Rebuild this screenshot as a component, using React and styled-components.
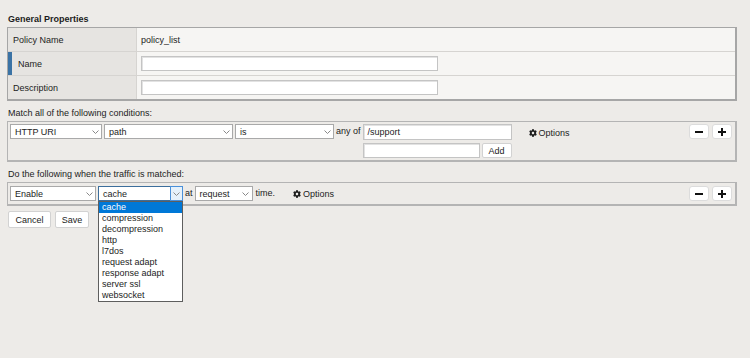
import React from 'react';
import styled, { createGlobalStyle } from 'styled-components';
import { FaCog } from 'react-icons/fa';

const GlobalStyle = createGlobalStyle`
  html, body {
    margin: 0;
    padding: 0;
    background: #edebe8;
  }
  body {
    font-family: "Liberation Sans", Arial, sans-serif;
    font-size: 9px;
    color: #1c1c1c;
  }
`;

const Page = styled.div`
  display: flex;
  flex-direction: column;
  padding: 14px 13px 0 7px;
  height: 344px;
`;

const Title = styled.div`
  font-weight: bold;
  line-height: 11px;
  padding-left: 1px;
`;

const Caption = styled.div`
  line-height: 11px;
  padding-left: 1px;
  margin-top: ${p => p.$top}px;
`;

const Table = styled.div`
  margin-top: 2px;
  border: 1px solid #a6a6a6;
  border-right-width: 2px;
  border-bottom-width: 2px;
  background: #f6f5f3;
`;

const Row = styled.div`
  display: grid;
  grid-template-columns: 129px 1fr;
  height: 23px;
  border-bottom: 1px solid #d6d4d1;
  &:last-child {
    border-bottom: none;
  }
`;

const Label = styled.div`
  display: flex;
  align-items: center;
  background: #e6e4e1;
  border-right: 1px solid #d6d4d1;
  padding-left: ${p => (p.$marked ? 6 : 5)}px;
  border-left: ${p => (p.$marked ? '4px solid #3b73a5' : 'none')};
`;

const Value = styled.div`
  display: flex;
  align-items: center;
  padding-left: 4px;
`;

const TextInput = styled.div`
  box-sizing: border-box;
  width: ${p => p.$w}px;
  height: ${p => p.$h || 15}px;
  background: #fff;
  border: 1px solid #c4c4c4;
  box-shadow: inset 1px 1px 0 #e2e2e2;
  display: flex;
  align-items: center;
  padding-left: 4px;
`;

const Box = styled.div`
  margin-top: 2px;
  border: 1px solid #b4b4b4;
  border-right-width: 2px;
  border-bottom-width: 2px;
  display: flex;
  align-items: flex-start;
  padding: ${p => p.$pad};
`;

const SelectBox = styled.div`
  position: relative;
  box-sizing: border-box;
  width: ${p => p.$w}px;
  height: 15px;
  margin-right: 2px;
  background: #fff;
  border: 1px solid ${p => (p.$focus ? '#3c6e9c' : '#a9a9a9')};
  display: flex;
  align-items: center;
  padding-left: 4px;
  flex-shrink: 0;
`;

const Chevron = styled.div`
  position: absolute;
  right: 0;
  top: 0;
  bottom: 0;
  width: 12px;
  display: flex;
  align-items: center;
  justify-content: center;
  box-sizing: border-box;
  ${p => p.$focus && 'border: 1px solid #4a90d9; background: #e5f1fb; top: -1px; bottom: -1px; right: -1px; width: 13px;'}
`;

const Word = styled.span`
  line-height: 15px;
  margin: 0 ${p => p.$r || 2}px 0 ${p => p.$l || 0}px;
  flex-shrink: 0;
`;

const Stack = styled.div`
  display: flex;
  flex-direction: column;
  gap: 3px;
`;

const Line = styled.div`
  display: flex;
  gap: 2px;
`;

const SmallButton = styled.div`
  box-sizing: border-box;
  height: ${p => p.$h || 15}px;
  width: ${p => p.$w}px;
  background: #fff;
  border: 1px solid #d2d2d2;
  border-radius: 2px;
  display: flex;
  align-items: center;
  justify-content: center;
`;

const Options = styled.div`
  display: flex;
  align-items: center;
  gap: 2px;
  height: 15px;
  margin-left: ${p => p.$l}px;
  margin-top: ${p => p.$t || 0}px;
  flex-shrink: 0;
`;

const Controls = styled.div`
  margin-left: auto;
  display: flex;
  gap: 3px;
`;

const IconButton = styled.div`
  box-sizing: border-box;
  width: 20px;
  height: 15px;
  background: #fff;
  border: 1px solid #dcdcdc;
  border-radius: 3px;
  display: flex;
  align-items: center;
  justify-content: center;
`;

const Actions = styled.div`
  display: flex;
  gap: 4px;
  margin-top: 5px;
  padding-left: 1px;
`;

const Menu = styled.div`
  position: absolute;
  top: 14px;
  left: -1px;
  width: 85px;
  box-sizing: border-box;
  background: #fff;
  border: 1px solid #5e5e5e;
  z-index: 5;
`;

const MenuItem = styled.div`
  height: 11px;
  line-height: 11px;
  padding-left: 3px;
  background: ${p => (p.$active ? '#0078d7' : 'transparent')};
  color: ${p => (p.$active ? '#fff' : '#1c1c1c')};
`;

const ChevronIcon = () => (
  <svg width="7" height="4" viewBox="0 0 7 4">
    <path d="M0.5 0.5 L3.5 3.5 L6.5 0.5" fill="none" stroke="#888" strokeWidth="1" />
  </svg>
);

const Minus = () => (
  <svg width="8" height="8" viewBox="0 0 8 8">
    <rect x="0" y="3" width="8" height="2" fill="#111" />
  </svg>
);

const Plus = () => (
  <svg width="8" height="8" viewBox="0 0 8 8">
    <rect x="0" y="3" width="8" height="2" fill="#111" />
    <rect x="3" y="0" width="2" height="8" fill="#111" />
  </svg>
);

const Select = ({ w, value, focus, children }) => (
  <SelectBox $w={w} $focus={focus}>
    {value}
    <Chevron $focus={focus}>
      <ChevronIcon />
    </Chevron>
    {children}
  </SelectBox>
);

const modules = ['cache', 'compression', 'decompression', 'http', 'l7dos', 'request adapt', 'response adapt', 'server ssl', 'websocket'];

const App = () => {
  return (
    <Page>
      <GlobalStyle />
      <Title>General Properties</Title>
      <Table>
        <Row>
          <Label>Policy Name</Label>
          <Value>policy_list</Value>
        </Row>
        <Row>
          <Label $marked>Name</Label>
          <Value><TextInput $w={297} /></Value>
        </Row>
        <Row>
          <Label>Description</Label>
          <Value><TextInput $w={297} /></Value>
        </Row>
      </Table>

      <Caption $top={7}>Match all of the following conditions:</Caption>
      <Box $pad="2px 3px 2px 2px">
        <Select w={92} value="HTTP URI" />
        <Select w={129} value="path" />
        <Select w={99} value="is" />
        <Word $r={2}>any of</Word>
        <Stack>
          <TextInput $w={149} $h={16}>/support</TextInput>
          <Line>
            <TextInput $w={117} />
            <SmallButton $w={30}>Add</SmallButton>
          </Line>
        </Stack>
        <Options $l={17} $t={1}><FaCog size={8} />Options</Options>
        <Controls>
          <IconButton><Minus /></IconButton>
          <IconButton><Plus /></IconButton>
        </Controls>
      </Box>

      <Caption $top={7}>Do the following when the traffic is matched:</Caption>
      <Box $pad="3px 3px 3px 2px">
        <Select w={86} value="Enable" />
        <Select w={85} value="cache" focus>
          <Menu>
            {modules.map((m, i) => (
              <MenuItem key={m} $active={i === 0}>{m}</MenuItem>
            ))}
          </Menu>
        </Select>
        <Word $r={2}>at</Word>
        <Select w={58} value="request" />
        <Word $l={1}>time.</Word>
        <Options $l={16}><FaCog size={8} />Options</Options>
        <Controls>
          <IconButton><Minus /></IconButton>
          <IconButton><Plus /></IconButton>
        </Controls>
      </Box>

      <Actions>
        <SmallButton $w={43} $h={17}>Cancel</SmallButton>
        <SmallButton $w={34} $h={17}>Save</SmallButton>
      </Actions>
    </Page>
  );
};

export default App;
